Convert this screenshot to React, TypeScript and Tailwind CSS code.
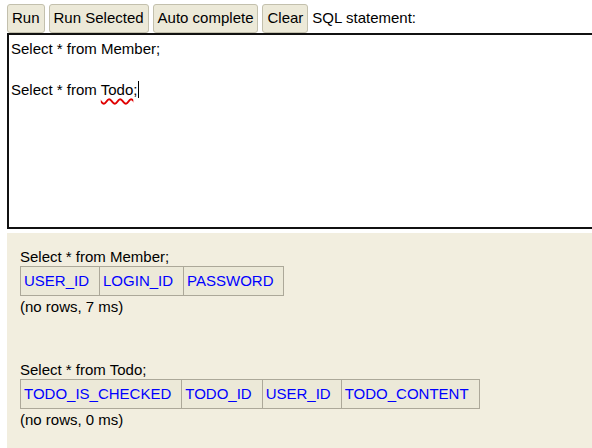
import React from 'react';

const font = { fontFamily: '"Liberation Sans", Arial, sans-serif' };

const ResultTable = ({ sql, cols, note }: { sql: string; cols: string[]; note: string }) => (
  <div>
    <div className="leading-[18px]">{sql}</div>
    <table className="border-collapse">
      <thead>
        <tr>
          {cols.map((c) => (
            <th
              key={c}
              className="border border-[#aca899] bg-[#ece9d8] py-[5px] pl-[3px] pr-[10px] text-left font-normal leading-[18px] text-[#0000ff]"
            >
              {c}
            </th>
          ))}
        </tr>
      </thead>
    </table>
    <div className="mt-[2px] leading-[18px]">{note}</div>
  </div>
);

export default function App() {
  const buttons = ['Run', 'Run Selected', 'Auto complete', 'Clear'];
  return (
    <div className="h-[448px] w-[592px] overflow-hidden bg-white text-[15px] text-black" style={font}>
      <div className="flex items-end gap-[4px] pl-[7px] pt-[4px]">
        {buttons.map((b) => (
          <button
            key={b}
            className="h-[29px] rounded-[3px] border border-[#c3c0ad] bg-[#ece9d8] px-[4px] text-[15px] text-black"
          >
            {b}
          </button>
        ))}
        <span className="mb-[4px]">SQL statement:</span>
      </div>
      <div className="ml-[7px] h-[196px] w-[600px] border-2 border-[#111] bg-white px-[2px] pt-[3px] leading-[21px]">
        <div>Select * from Member;</div>
        <div className="h-[20px]" />
        <div>
          Select * from{' '}
          <span className="underline decoration-[#e00000] decoration-wavy decoration-[1.5px] underline-offset-[3px]">Todo</span>;
          <span className="ml-[1px] inline-block h-[17px] w-px bg-black align-[-3px]" />
        </div>
      </div>
      <div className="ml-[7px] mt-[4px] h-[220px] bg-[#f2eedf] pl-[13px] pt-[15px]">
        <ResultTable sql="Select * from Member;" cols={['USER_ID', 'LOGIN_ID', 'PASSWORD']} note="(no rows, 7 ms)" />
        <div className="h-[45px]" />
        <ResultTable
          sql="Select * from Todo;"
          cols={['TODO_IS_CHECKED', 'TODO_ID', 'USER_ID', 'TODO_CONTENT']}
          note="(no rows, 0 ms)"
        />
      </div>
    </div>
  );
}
